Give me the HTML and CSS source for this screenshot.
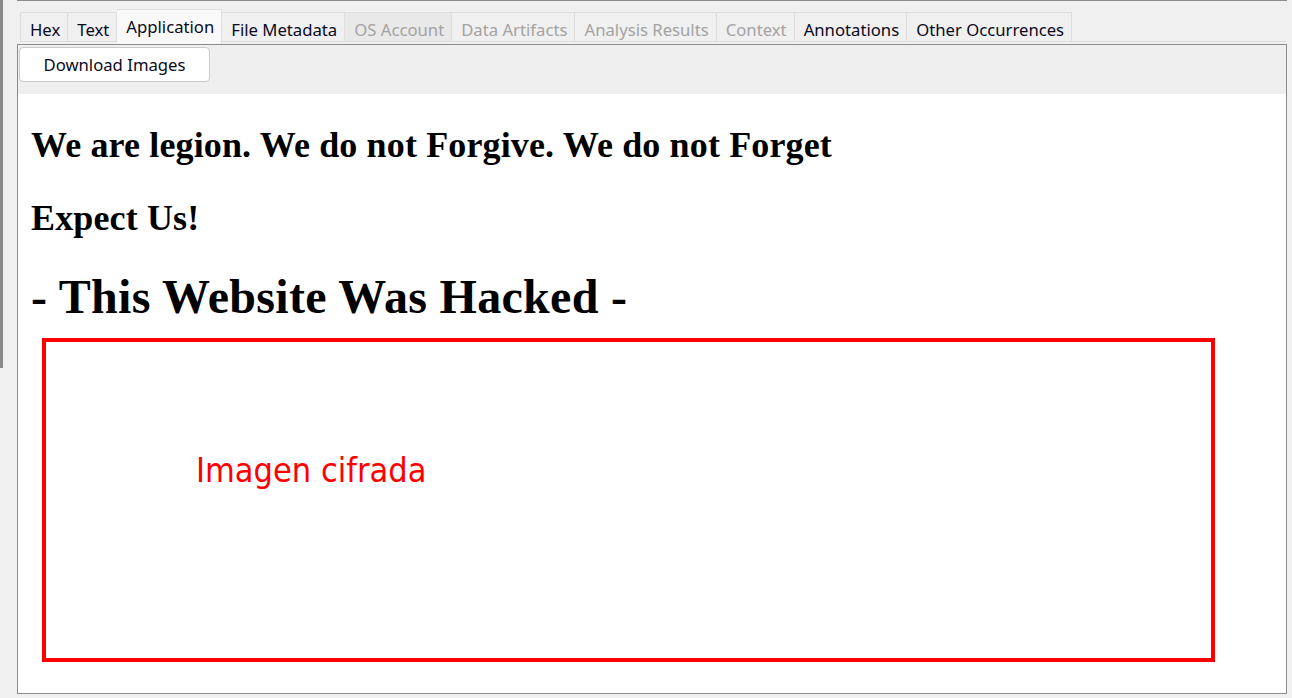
FILE: index.html
```html
<!DOCTYPE html>
<html>
<head>
<meta charset="utf-8">
<link rel="stylesheet" href="styles.css">
</head>
<body>
<div class="app">
  <div class="strip"></div>
  <div class="main">
    <div class="tabs">
      <div class="tab first">Hex</div>
      <div class="tab">Text</div>
      <div class="tab active">Application</div>
      <div class="tab">File Metadata</div>
      <div class="tab disabled hover">OS Account</div>
      <div class="tab disabled">Data Artifacts</div>
      <div class="tab disabled">Analysis Results</div>
      <div class="tab disabled">Context</div>
      <div class="tab">Annotations</div>
      <div class="tab">Other Occurrences</div>
      <div class="tab-fill"></div>
    </div>
    <div class="panel">
      <div class="toolbar">
        <button class="btn">Download Images</button>
      </div>
      <div class="content">
        <h2 class="line1">We are legion. We do not Forgive. We do not Forget</h2>
        <h2 class="line2">Expect Us!</h2>
        <h1 class="line3">- This Website Was Hacked -</h1>
        <div class="imgbox"><span class="imgtext">Imagen cifrada</span></div>
      </div>
    </div>
  </div>
</div>
</body>
</html>
```

FILE: styles.css
```css
html, body {
  margin: 0;
  padding: 0;
  background: #f0f0f0;
  width: 1292px;
  height: 698px;
  overflow: hidden;
}

.app {
  display: flex;
  align-items: flex-start;
  font-family: "Noto Sans", "Open Sans", sans-serif;
}

.strip {
  width: 3px;
  height: 368px;
  background: #8a8a8a;
  flex: none;
}

.main {
  margin-left: 14px;
  width: 1270px;
  border-top: 1px solid #8c8c8c;
  display: flex;
  flex-direction: column;
}

.tabs {
  height: 43px;
  display: flex;
  align-items: flex-end;
  padding-left: 3px;
}

.tab {
  box-sizing: border-box;
  height: 30px;
  margin-bottom: 2px;
  padding: 0 7px 0 9px;
  border-top: 1px solid #dedede;
  border-right: 1px solid #dedede;
  border-bottom: 1px solid #dcdcdc;
  background: #f0f0f0;
  font-size: 16.7px;
  line-height: 33px;
  color: #0a0a1e;
  white-space: nowrap;
  overflow: hidden;
}

.tab.first {
  border-left: 1px solid #dedede;
}

.tab.active {
  height: 35px;
  margin-bottom: 0;
  border-bottom: none;
  background: #f9f9f9;
  line-height: 33px;
}

.tab.disabled {
  color: #a3a3a3;
}

.tab.hover {
  background: #e9e9e9;
}

.tab-fill {
  flex: 1;
  margin-bottom: 2px;
  border-bottom: 1px solid #dcdcdc;
}

.panel {
  box-sizing: border-box;
  height: 650px;
  border: 1px solid #8c8c8c;
  display: flex;
  flex-direction: column;
}

.toolbar {
  height: 49px;
  box-sizing: border-box;
  background: #efefef;
  padding: 2px 1px;
}

.btn {
  width: 191px;
  height: 35px;
  box-sizing: border-box;
  background: #ffffff;
  border: 1px solid #cacaca;
  border-radius: 4px;
  font-family: "Noto Sans", "Open Sans", sans-serif;
  font-size: 16.7px;
  color: #0a0a1e;
  padding: 0;
}

.content {
  flex: 1;
  background: #ffffff;
  padding: 0 13px;
  font-family: "Liberation Serif", "Times New Roman", serif;
  color: #000;
}

.line1, .line2 {
  font-size: 36px;
  line-height: 40px;
  font-weight: 700;
  letter-spacing: 0.14px;
  margin: 0;
}

.line1 {
  margin-top: 31px;
}

.line2 {
  margin-top: 33px;
}

.line3 {
  font-size: 48px;
  line-height: 54px;
  font-weight: 700;
  letter-spacing: 0.3px;
  margin: 32px 0 0;
}

.imgbox {
  box-sizing: border-box;
  width: 1173px;
  height: 324px;
  margin: 14px 0 0 11px;
  border: 4px solid #ff0000;
  padding: 108px 0 0 150px;
}

.imgtext {
  font-family: "DejaVu Sans", sans-serif;
  font-stretch: condensed;
  font-size: 34px;
  line-height: 40px;
  color: #ff0000;
}
```
